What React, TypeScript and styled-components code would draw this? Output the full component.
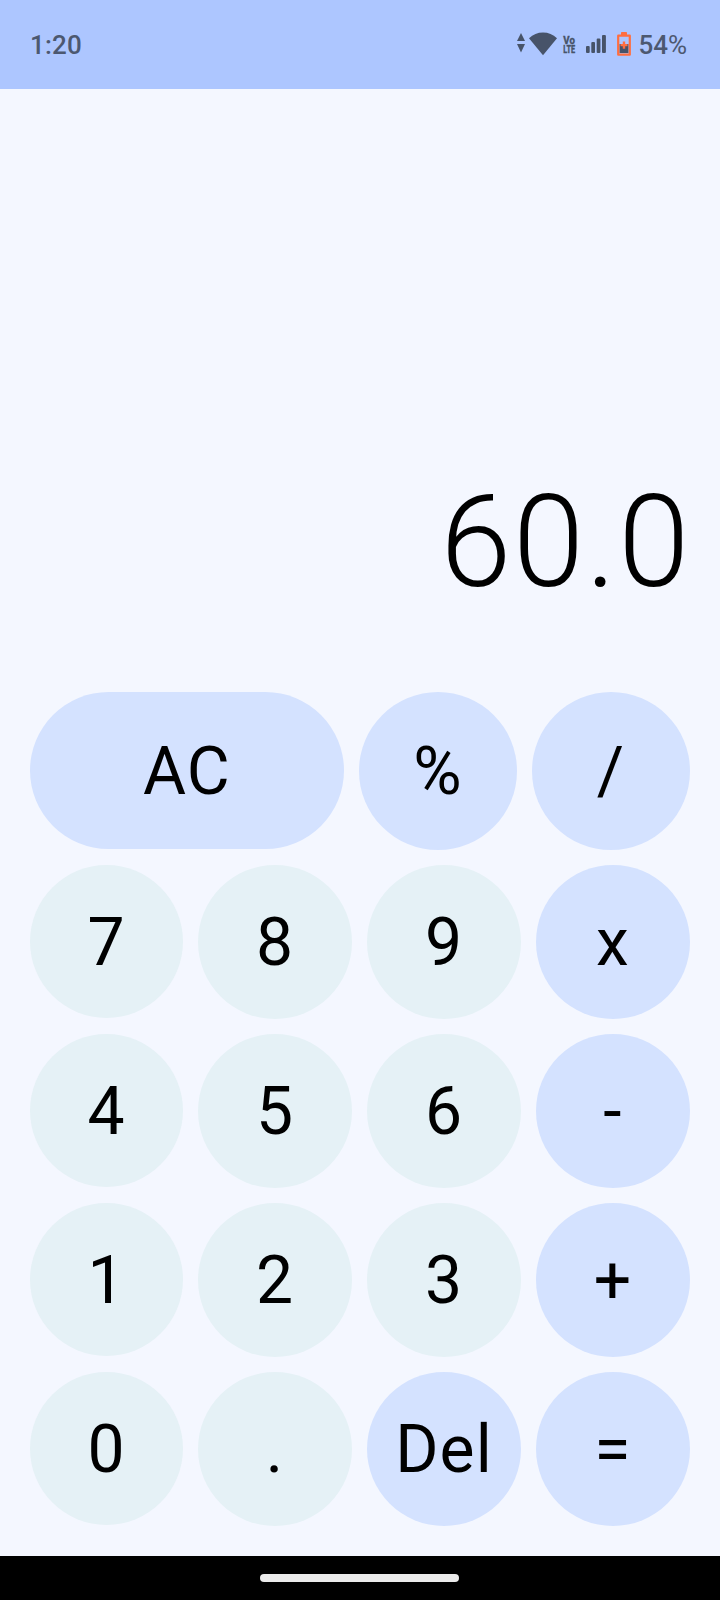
import React from 'react';
import styled, { createGlobalStyle } from 'styled-components';

const Global = createGlobalStyle`
  * { box-sizing: border-box; }
  body { margin: 0; background: #f4f7ff; font-family: Roboto, sans-serif; }
`;
const Screen = styled.div`
  width: 720px; height: 1600px; display: flex; flex-direction: column; background: #f4f7ff;
`;
const StatusBar = styled.header`
  height: 89px; background: #adc6ff; color: #4c5870; display: flex; align-items: center;
  justify-content: space-between; padding: 0 33px 1px 30px; font-size: 26px; line-height: 30px;
`;
const Clock = styled.span`font-weight: 500; letter-spacing: 0.2px; padding-top: 2px;`;
const Battery = styled.span`padding: 2px 0 0 7px; font-weight: 500;`;
const Percent = styled.span`font-weight: 400;`;
const StatusIcons = styled.div`
  display: flex; align-items: center;
  svg { display: block; flex: none; }
`;
const Icon = styled.svg<{ $before?: number }>`margin-left: ${p => p.$before ?? 0}px; fill: #475369;`;
const Display = styled.output`
  flex: 1; display: flex; align-items: flex-end; justify-content: flex-end;
  padding: 0 29px 74px; font-size: 128px; font-weight: 300; line-height: 152px; letter-spacing: 1.8px; color: #000;
`;
const Keypad = styled.main`display: flex; flex-direction: column; gap: 15px; padding: 0 30px 30px;`;
const Row = styled.div<{ $wideFirst: boolean }>`
  display: grid; gap: 15px;
  grid-template-columns: ${p => (p.$wideFirst ? '314px 158px 158px' : '153px 154px 154px 154px')};
  height: ${p => (p.$wideFirst ? 158 : 154)}px;
`;
const Key = styled.button<{ $tone: 'number' | 'action' }>`
  border: 0; padding: 2px 0 0; border-radius: 80px; font: 400 66px/66px Roboto, sans-serif; color: #000;
  letter-spacing: 1.1px;
  background: ${p => (p.$tone === 'action' ? '#d4e2ff' : '#e5f1f6')};
  &:first-child { margin-bottom: 1px; padding-top: 3px; }
`;
const NavBar = styled.footer`
  height: 44px; background: #000; display: flex; align-items: center; justify-content: center;
`;
const Handle = styled.div`width: 199px; height: 8px; margin-right: 1px; border-radius: 4px; background: #ebebeb;`;

const rows = [
  ['AC', '%', '/'],
  ['7', '8', '9', 'x'],
  ['4', '5', '6', '-'],
  ['1', '2', '3', '+'],
  ['0', '.', 'Del', '='],
];

export default function App() {
  return (
    <Screen>
      <Global />
      <StatusBar>
        <Clock>1:20</Clock>
        <StatusIcons>
          <Icon width="8" height="24" viewBox="0 0 8 24">
            <path d="M4 1L8 9H0ZM0 12H8L4 20.5Z" />
          </Icon>
          <Icon $before={4} width="28" height="24" viewBox="0 0 28 24">
            <path d="M0 6.3Q6 0.5 14 0.5T28 6.3L14 23.3Z" />
          </Icon>
          <Icon $before={4} width="18" height="32" viewBox="0 0 18 32" fontFamily="Roboto, sans-serif" fontWeight="800" stroke="#475369" strokeWidth="0.3">
            <text fontSize="10" letterSpacing="0" transform="translate(2.3 0) scale(0.68 1)">
              <tspan x="0" y="15.8" textLength="17" lengthAdjust="spacingAndGlyphs">Vo</tspan>
              <tspan x="0" y="25" textLength="17.5" lengthAdjust="spacingAndGlyphs">LTE</tspan>
            </text>
          </Icon>
          <Icon $before={7} width="20" height="24" viewBox="0 0 20 24">
            <rect x="0" y="14" width="3.7" height="7" rx="1" />
            <rect x="5.3" y="10" width="3.7" height="11" rx="1" />
            <rect x="10.7" y="6.5" width="3.7" height="14.5" rx="1" />
            <rect x="16" y="3" width="3.9" height="18" rx="1" />
          </Icon>
          <Icon $before={11} width="14" height="24" viewBox="0 0 14 24">
            <rect x="4" y="0" width="6" height="4" rx="0.7" fill="#ff6e40" />
            <path d="M1.3 3.5H12.7V22.7H1.3Z" fill="#adc6ff" />
            <rect x="2.5" y="12" width="9" height="9" />
            <rect x="1.2" y="3.7" width="11.6" height="19" fill="none" stroke="#ff6e40" strokeWidth="2.2" strokeLinejoin="round" />
            <path d="M5.8 9.5H8.2V12H10.5V14.3H8.2V16.8H5.8V14.3H3.5V12H5.8Z" fill="#ff6e40" />
          </Icon>
          <Battery>54<Percent>%</Percent></Battery>
        </StatusIcons>
      </StatusBar>
      <Display>60.0</Display>
      <Keypad>
        {rows.map((keys, i) => (
          <Row key={i} $wideFirst={i === 0}>
            {keys.map(k => (
              <Key key={k} $tone={/^[0-9.]$/.test(k) ? 'number' : 'action'}>{k}</Key>
            ))}
          </Row>
        ))}
      </Keypad>
      <NavBar><Handle /></NavBar>
    </Screen>
  );
}
